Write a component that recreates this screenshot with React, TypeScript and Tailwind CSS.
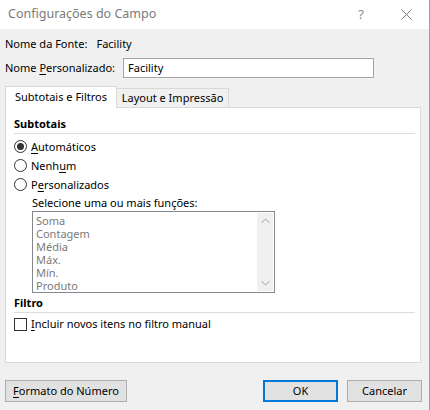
import React from "react";

const font = { fontFamily: '"Noto Sans", "Segoe UI", Arial, sans-serif' };

function U({ children }: { children: React.ReactNode }) {
  return <span className="underline underline-offset-2">{children}</span>;
}

function Radio({ checked, children }: { checked?: boolean; children: React.ReactNode }) {
  return (
    <div className="flex h-[19px] items-center">
      <span className="flex h-[13px] w-[13px] items-center justify-center rounded-full border border-[#333333] bg-white">
        {checked && <span className="h-[7px] w-[7px] rounded-full bg-[#333333]" />}
      </span>
      <span className="ml-[4px] leading-[16px]">{children}</span>
    </div>
  );
}

function Section({ title }: { title: string }) {
  return (
    <div>
      <div className="font-bold leading-[16px]">{title}</div>
      <div className="mt-px h-px bg-[#dcdcdc]" />
    </div>
  );
}

export default function App() {
  const items = ["Soma", "Contagem", "Média", "Máx.", "Mín.", "Produto"];

  return (
    <div
      className="h-[410px] w-[430px] overflow-hidden border-r border-[#a0a0a0] bg-[#f0f0f0] text-[11px] text-black"
      style={font}
    >
      {/* title bar */}
      <div className="flex h-[29px] items-center bg-white">
        <span className="ml-[8px] text-[12.5px] text-[#7a7a7a]">Configurações do Campo</span>
        <span className="ml-auto text-[13px] text-[#8a8a8a]">?</span>
        <svg width="11" height="11" viewBox="0 0 11 11" className="ml-[37px] mr-[17px]">
          <path d="M0.5 0.5 L10.5 10.5 M10.5 0.5 L0.5 10.5" stroke="#7a7a7a" strokeWidth="1" />
        </svg>
      </div>

      <div className="px-[5px]">
        <div className="mt-[7px] flex h-[16px] items-center">
          <span>Nome da Fonte:</span>
          <span className="ml-[9px]">Facility</span>
        </div>

        <div className="mt-[6px] flex h-[20px] items-center">
          <span>
            Nome <U>P</U>ersonalizado:
          </span>
          <div className="ml-auto mr-[50px] flex h-[20px] w-[251px] items-center border border-[#a5a5a5] bg-white pl-[4px]">
            Facility
          </div>
        </div>

        {/* tabs */}
        <div className="mt-[8px] flex h-[21px] items-end">
          <div className="relative z-10 -mb-px flex h-[22px] w-[112px] items-center justify-center border-x border-t border-[#d9d9d9] bg-white">
            Subtotais e Filtros
          </div>
          <div className="flex h-[19px] w-[112px] items-center justify-center border-r border-t border-[#d9d9d9]">
            Layout e Impressão
          </div>
        </div>

        {/* panel */}
        <div className="h-[256px] w-[416px] border border-[#d9d9d9] bg-white pl-[8px] pr-[5px] pt-[8px]">
          <Section title="Subtotais" />
          <div className="mt-[3px]">
            <Radio checked>
              <U>A</U>utomáticos
            </Radio>
            <Radio>
              Nenh<U>u</U>m
            </Radio>
            <Radio>
              P<U>e</U>rsonalizados
            </Radio>
          </div>
          <div className="ml-[18px]">
            <div className="mt-px h-[16px] leading-[16px]">Selecione uma ou mais funções:</div>
            <div className="flex h-[82px] w-[243px] overflow-hidden border border-[#828790] bg-white">
              <div className="flex-1 pl-[3px] pt-[2px] text-[#7a7a7a]">
                {items.map((it) => (
                  <div key={it} className="h-[13px] leading-[13px]">
                    {it}
                  </div>
                ))}
              </div>
              <div className="my-px mr-px flex w-[16px] flex-col items-center justify-between bg-[#f0f0f0] py-[5px]">
                <svg width="9" height="6" viewBox="0 0 9 6">
                  <path d="M0.5 5 L4.5 1 L8.5 5" fill="none" stroke="#c2c2c2" strokeWidth="1.2" />
                </svg>
                <svg width="9" height="6" viewBox="0 0 9 6">
                  <path d="M0.5 1 L4.5 5 L8.5 1" fill="none" stroke="#c2c2c2" strokeWidth="1.2" />
                </svg>
              </div>
            </div>
          </div>

          <div className="mt-[2px]">
            <Section title="Filtro" />
          </div>
          <div className="mt-[2px] flex h-[19px] items-center">
            <span className="h-[13px] w-[13px] border border-[#333333] bg-white" />
            <span className="ml-[4px]">
              <U>I</U>ncluir novos itens no filtro manual
            </span>
          </div>
        </div>

        {/* buttons */}
        <div className="mt-[17px] flex h-[22px]">
          <button className="w-[122px] border border-[#adadad] bg-[#e1e1e1]">
            <U>F</U>ormato do Número
          </button>
          <button className="ml-auto w-[75px] border-2 border-[#0078d7] bg-[#e1e1e1]">OK</button>
          <button className="ml-[9px] mr-[2px] w-[75px] border border-[#adadad] bg-[#e1e1e1]">
            Cancelar
          </button>
        </div>
      </div>
    </div>
  );
}
